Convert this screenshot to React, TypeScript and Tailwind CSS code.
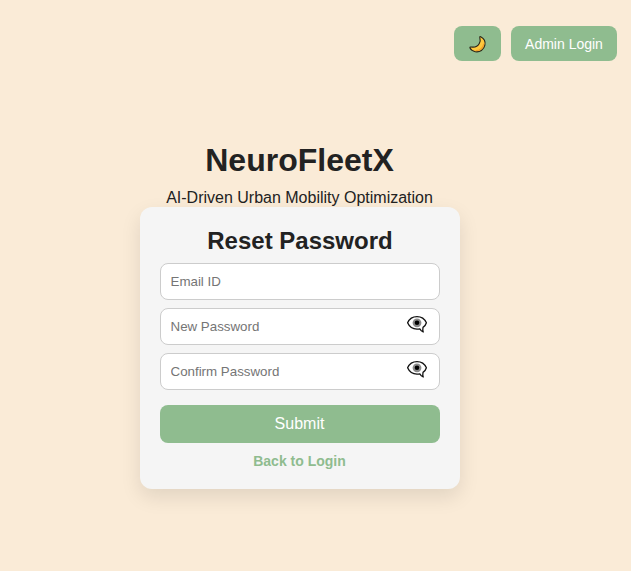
import React from "react";

function MoonIcon() {
  return (
    <svg width="18" height="18" viewBox="0.6 -0.1 18 18" aria-hidden="true">
      <path
        d="M12.3 1.6C15.4 3.2 17.3 6.4 16.5 10.1C15.5 14.7 11.4 17.4 6.9 16.6C4.3 16.1 2.4 14.7 1.6 13C1.3 12.2 1.7 11.7 2.5 11.9C5.8 12.4 9.3 11.4 10.9 8.3C11.9 6.4 12 4.4 11.4 2.4C11.2 1.6 11.6 1.3 12.3 1.6Z"
        fill="#ffc83d"
        stroke="#2a261a"
        strokeWidth="1.1"
        strokeLinejoin="round"
      />
      <path d="M15.4 8.5C14.9 12.4 11.6 15.5 7.2 15.5" fill="none" stroke="#f59f28" strokeWidth="1.1" />
    </svg>
  );
}

function EyeIcon() {
  return (
    <svg width="22" height="20" viewBox="0 0 22 20" aria-hidden="true">
      <path
        d="M1.6 7.7C3.3 3.9 6.8 1.6 11 1.6C15.2 1.6 18.7 3.9 20.4 7.7C19.8 9.7 18.6 11.3 17 12.4C16.7 13.8 16.8 15.4 17.2 17C15.7 16.4 14.5 15.3 13.8 13.8C8.2 14.8 3.6 12.2 1.6 7.7Z"
        fill="#fff"
        stroke="#111"
        strokeWidth="1.3"
        strokeLinejoin="round"
      />
      <circle cx="11" cy="7.8" r="4.4" fill="#8a8a8a" />
      <circle cx="11" cy="7.8" r="2.3" fill="#000" />
    </svg>
  );
}

type FieldProps = { placeholder: string; type: string; secret?: boolean };

function Field({ placeholder, type, secret = false }: FieldProps) {
  return (
    <div className="relative h-[37px]">
      <input
        type={type}
        placeholder={placeholder}
        className="block h-full w-full rounded-lg border border-[#ccc] bg-white px-[9.5px] text-[13.333px] placeholder:text-[#757575]"
      />
      {secret && (
        <button type="button" aria-label="Show password" className="absolute top-[7px] right-3">
          <EyeIcon />
        </button>
      )}
    </div>
  );
}

export default function App() {
  return (
    <div className="min-h-screen bg-[#faebd7] font-['Liberation_Sans',Arial,sans-serif] text-[#222]">
      <header className="flex h-[61px] justify-end gap-[10px] pt-[26px] pr-[14px] text-sm text-white">
        <button aria-label="Dark mode" className="flex w-[47px] items-center justify-center rounded-lg bg-[#8fbc8f]">
          <MoonIcon />
        </button>
        <button className="w-[106px] rounded-lg bg-[#8fbc8f]">Admin Login</button>
      </header>
      <main className="ml-[140px] w-80 pt-[81px] text-center">
        <h1 className="pr-px text-[32px] leading-[37px] font-bold">NeuroFleetX</h1>
        <p className="mt-[10px] h-[18px] pr-px text-base leading-[18px] whitespace-nowrap">
          AI-Driven Urban Mobility Optimization
        </p>
        <form className="relative h-[282px] rounded-xl bg-[#f5f5f5] px-5 pt-5 shadow-[0_8px_20px_rgba(0,0,0,0.1)]">
          <h2 className="text-2xl leading-[28px] font-bold">Reset Password</h2>
          <div className="mt-2 flex flex-col gap-2">
            <Field type="email" placeholder="Email ID" />
            <Field type="password" placeholder="New Password" secret />
            <Field type="password" placeholder="Confirm Password" secret />
          </div>
          <button type="button" className="mt-[15px] block h-[38px] w-full rounded-lg bg-[#8fbc8f] pr-px text-base text-white">
            Submit
          </button>
          <a className="mt-[10px] block pr-px text-sm leading-4 font-bold text-[#8fbc8f]">Back to Login</a>
        </form>
      </main>
    </div>
  );
}
